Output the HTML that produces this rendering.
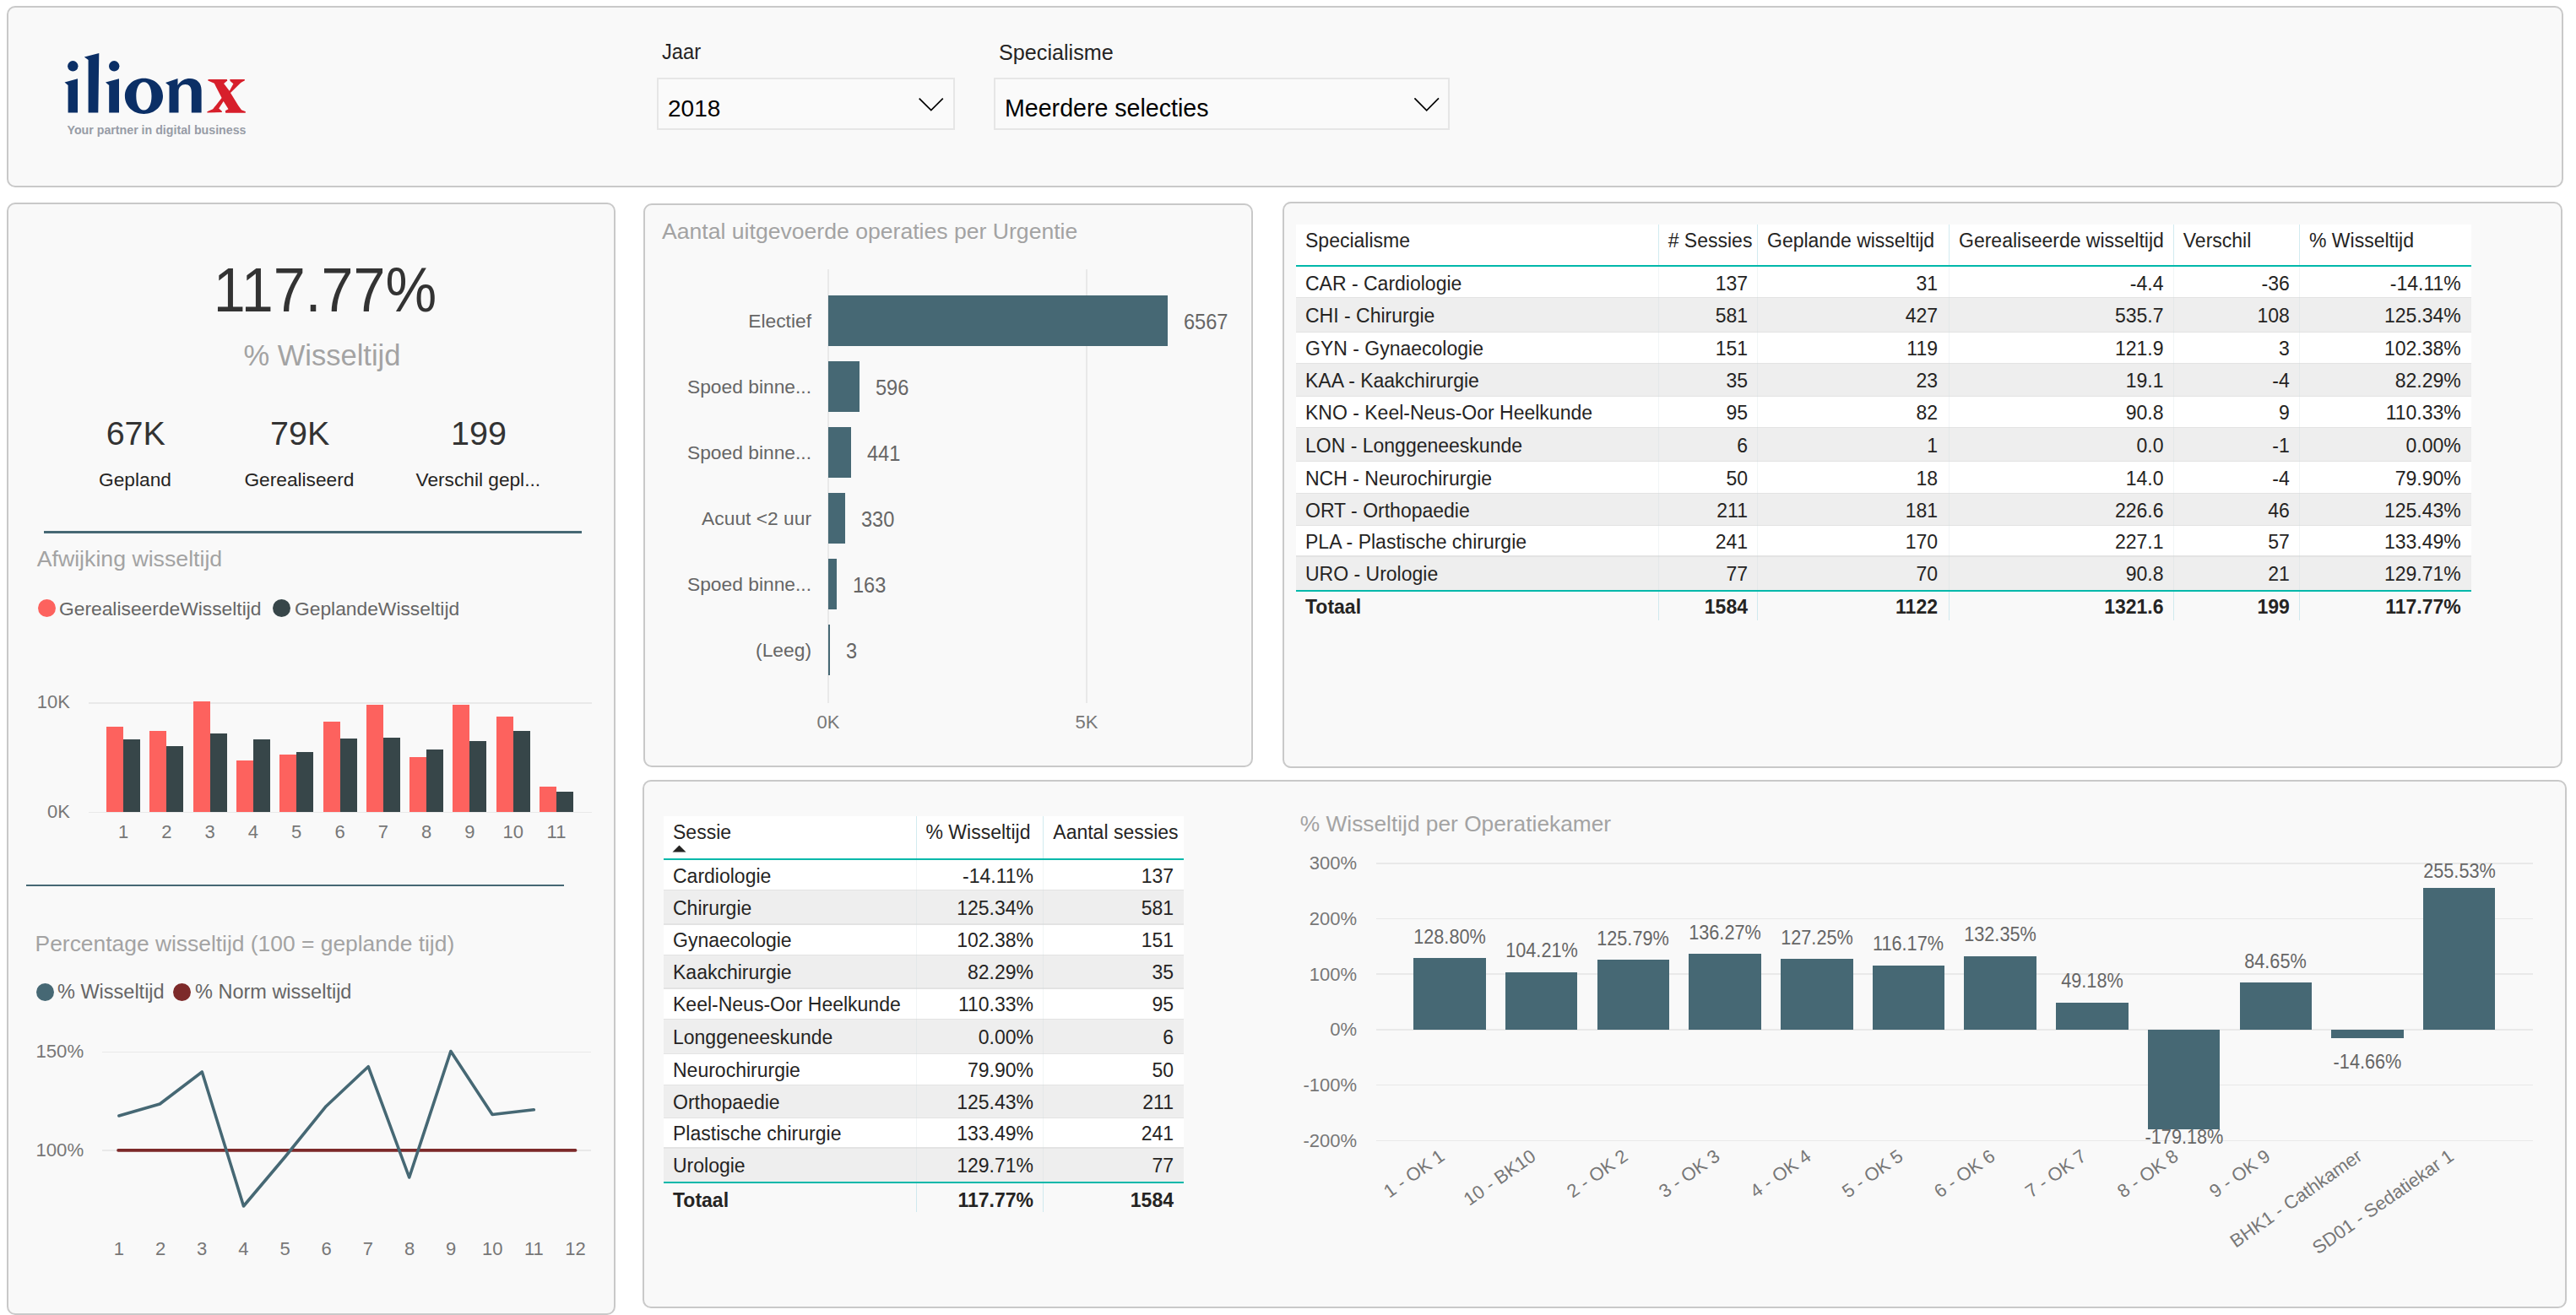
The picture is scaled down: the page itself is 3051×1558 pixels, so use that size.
<!DOCTYPE html>
<html><head><meta charset="utf-8"><title>Dashboard</title>
<style>
html,body{margin:0;padding:0;}
body{width:3051px;height:1558px;position:relative;overflow:hidden;background:#ffffff;font-family:"Liberation Sans",sans-serif;}
.t{position:absolute;white-space:nowrap;line-height:1em;}
.r{position:absolute;}
.p{position:absolute;box-sizing:border-box;border:2px solid #c9c9c9;border-radius:10px;background:#f9f9f9;}
.dot{position:absolute;border-radius:50%;}
</style></head><body>
<div class="p" style="left:8px;top:7px;width:3028px;height:215px;"></div>
<div class="p" style="left:8px;top:240px;width:721px;height:1318px;"></div>
<div class="p" style="left:762px;top:241px;width:722px;height:668px;"></div>
<div class="p" style="left:1519px;top:239px;width:1516px;height:671px;"></div>
<div class="p" style="left:761px;top:924px;width:2279px;height:626px;"></div>
<svg class="r" style="left:60px;top:55px;" width="250" height="115" viewBox="60 55 250 115">
<g fill="#0b2f66">
<circle cx="86.3" cy="78.3" r="6.2"/>
<path d="M76.5 97.5 L92 93.2 L92 133.5 L80.6 133.5 L80.6 101 Z"/>
<path d="M99.8 67.5 L117.3 63.1 L116.3 133.5 L104.6 133.5 L104.6 71 Z"/>
<circle cx="135.2" cy="78.3" r="6.2"/>
<path d="M125 97.5 L141 93.2 L141 133.5 L129.2 133.5 L129.2 101 Z"/>
<path fill-rule="evenodd" d="M170.4 92.7 C183.5 92.7 193 102.2 193 113.8 C193 125.5 183.5 135 170.4 135 C157.4 135 147.9 125.5 147.9 113.8 C147.9 102.2 157.4 92.7 170.4 92.7 Z M170.4 97.2 C164.6 97.2 161.3 104.2 161.3 113.8 C161.3 123.5 164.6 130.5 170.4 130.5 C176.3 130.5 179.5 123.5 179.5 113.8 C179.5 104.2 176.3 97.2 170.4 97.2 Z"/>
<path d="M196 98 L210.5 93 L210.5 101 C214 95.5 219 93 225 93 C233 93 238.6 98 238.6 107 L238.6 133.5 L226.8 133.5 L226.8 109 C226.8 103 224 100 219.5 100 C215 100 211.5 103 211.5 108 L211.5 133.5 L200.5 133.5 L200.5 101.5 Z"/>
</g>
<path fill="#d71f2b" d="M246.3 94.4 L247.1 93.9 L268.8 93.9 L269.3 95.5 L265.1 99.0 L271.8 107.8 L276.4 99.2 L272.6 95.9 L272.2 94.0 L289.7 94.0 L290.0 95.2 L285.2 98.0 L273.0 110.1 L282.2 125.1 L286.0 130.2 L291.0 132.2 L290.6 133.7 L267.2 133.7 L266.8 131.2 L270.5 129.3 L264.7 120.1 L259.2 128.5 L262.6 131.4 L263.0 133.1 L245.4 133.5 L245.4 132.2 L252.1 129.3 L262.6 115.9 L253.8 98.8 L246.3 95.5 Z"/>
<text x="79.5" y="158.5" font-family="Liberation Sans" font-weight="bold" font-size="15.2" fill="#979ca6" textLength="212" lengthAdjust="spacingAndGlyphs">Your partner in digital business</text>
</svg>
<div class="t" style="left:784.0px;top:49.4px;font-size:25.5px;color:#252423;transform:scaleX(0.93);transform-origin:0 0;">Jaar</div>
<div class="t" style="left:1183.0px;top:49.7px;font-size:25.2px;color:#252423;">Specialisme</div>
<div class="r" style="left:778px;top:92px;width:349px;height:58px;border:2px solid #e6e6e6;background:#fafafa"></div>
<div class="r" style="left:1177px;top:92px;width:536px;height:58px;border:2px solid #e6e6e6;background:#fafafa"></div>
<div class="t" style="left:791.0px;top:114.9px;font-size:28px;color:#000;">2018</div>
<div class="t" style="left:1190.0px;top:114.4px;font-size:28.6px;color:#000;">Meerdere selecties</div>
<svg class="r" style="left:0;top:0" width="1800" height="200"><path d="M1088.7 116.6 L1102.8 130.6 L1116.8 116.6 M1675.4 116.4 L1689.7 130.8 L1704 116.4" fill="none" stroke="#000" stroke-width="1.7"/></svg>
<div class="t" style="left:384.8px;top:305.5px;font-size:75px;color:#333333;transform:translateX(-50%) scaleX(0.91);transform-origin:50% 0;">117.77%</div>
<div class="t" style="left:381.5px;top:403.8px;font-size:34.5px;color:#a3a3a3;transform:translateX(-50%);">% Wisseltijd</div>
<div class="t" style="left:160.8px;top:493.9px;font-size:39.5px;color:#333333;transform:translateX(-50%);">67K</div>
<div class="t" style="left:355.2px;top:493.9px;font-size:39.5px;color:#333333;transform:translateX(-50%);">79K</div>
<div class="t" style="left:567.0px;top:493.9px;font-size:39.5px;color:#333333;transform:translateX(-50%);">199</div>
<div class="t" style="left:160.0px;top:556.8px;font-size:22.7px;color:#252423;transform:translateX(-50%);">Gepland</div>
<div class="t" style="left:354.4px;top:556.8px;font-size:22.7px;color:#252423;transform:translateX(-50%);">Gerealiseerd</div>
<div class="t" style="left:566.3px;top:556.8px;font-size:22.7px;color:#252423;transform:translateX(-50%);">Verschil gepl...</div>
<div class="r" style="left:52.0px;top:629.2px;width:637.0px;height:2.5px;background:#466874;"></div>
<div class="t" style="left:43.7px;top:649.4px;font-size:26.7px;color:#a3a3a3;">Afwijking wisseltijd</div>
<div class="dot" style="left:44.5px;top:710.2px;width:21px;height:21px;background:#fd625e"></div>
<div class="t" style="left:70.0px;top:709.7px;font-size:22.8px;color:#666666;">GerealiseerdeWisseltijd</div>
<div class="dot" style="left:323px;top:710.2px;width:21px;height:21px;background:#374649"></div>
<div class="t" style="left:349.0px;top:709.7px;font-size:22.8px;color:#666666;">GeplandeWisseltijd</div>
<div class="r" style="left:105.0px;top:832.0px;width:596.0px;height:1.5px;background:#e9e9e9;"></div>
<div class="r" style="left:105.0px;top:961.5px;width:596.0px;height:1.5px;background:#e9e9e9;"></div>
<div class="t" style="left:83.0px;top:821.4px;font-size:22px;color:#777777;transform:translateX(-100%);">10K</div>
<div class="t" style="left:83.0px;top:951.4px;font-size:22px;color:#777777;transform:translateX(-100%);">0K</div>
<div class="r" style="left:126.0px;top:860.6px;width:20.0px;height:101.4px;background:#fd625e;"></div>
<div class="r" style="left:146.0px;top:875.6px;width:20.0px;height:86.4px;background:#374649;"></div>
<div class="t" style="left:146.0px;top:975.4px;font-size:22px;color:#777777;transform:translateX(-50%);">1</div>
<div class="r" style="left:177.3px;top:865.8px;width:20.0px;height:96.2px;background:#fd625e;"></div>
<div class="r" style="left:197.3px;top:884.0px;width:20.0px;height:78.0px;background:#374649;"></div>
<div class="t" style="left:197.3px;top:975.4px;font-size:22px;color:#777777;transform:translateX(-50%);">2</div>
<div class="r" style="left:228.6px;top:830.8px;width:20.0px;height:131.2px;background:#fd625e;"></div>
<div class="r" style="left:248.6px;top:868.6px;width:20.0px;height:93.4px;background:#374649;"></div>
<div class="t" style="left:248.6px;top:975.4px;font-size:22px;color:#777777;transform:translateX(-50%);">3</div>
<div class="r" style="left:279.9px;top:900.8px;width:20.0px;height:61.2px;background:#fd625e;"></div>
<div class="r" style="left:299.9px;top:876.3px;width:20.0px;height:85.7px;background:#374649;"></div>
<div class="t" style="left:299.9px;top:975.4px;font-size:22px;color:#777777;transform:translateX(-50%);">4</div>
<div class="r" style="left:331.2px;top:893.8px;width:20.0px;height:68.2px;background:#fd625e;"></div>
<div class="r" style="left:351.2px;top:891.0px;width:20.0px;height:71.0px;background:#374649;"></div>
<div class="t" style="left:351.2px;top:975.4px;font-size:22px;color:#777777;transform:translateX(-50%);">5</div>
<div class="r" style="left:382.5px;top:855.3px;width:20.0px;height:106.7px;background:#fd625e;"></div>
<div class="r" style="left:402.5px;top:875.3px;width:20.0px;height:86.7px;background:#374649;"></div>
<div class="t" style="left:402.5px;top:975.4px;font-size:22px;color:#777777;transform:translateX(-50%);">6</div>
<div class="r" style="left:433.8px;top:835.4px;width:20.0px;height:126.6px;background:#fd625e;"></div>
<div class="r" style="left:453.8px;top:873.5px;width:20.0px;height:88.5px;background:#374649;"></div>
<div class="t" style="left:453.8px;top:975.4px;font-size:22px;color:#777777;transform:translateX(-50%);">7</div>
<div class="r" style="left:485.1px;top:897.3px;width:20.0px;height:64.7px;background:#fd625e;"></div>
<div class="r" style="left:505.1px;top:887.5px;width:20.0px;height:74.5px;background:#374649;"></div>
<div class="t" style="left:505.1px;top:975.4px;font-size:22px;color:#777777;transform:translateX(-50%);">8</div>
<div class="r" style="left:536.4px;top:835.4px;width:20.0px;height:126.6px;background:#fd625e;"></div>
<div class="r" style="left:556.4px;top:878.1px;width:20.0px;height:83.9px;background:#374649;"></div>
<div class="t" style="left:556.4px;top:975.4px;font-size:22px;color:#777777;transform:translateX(-50%);">9</div>
<div class="r" style="left:587.7px;top:849.0px;width:20.0px;height:113.0px;background:#fd625e;"></div>
<div class="r" style="left:607.7px;top:866.2px;width:20.0px;height:95.8px;background:#374649;"></div>
<div class="t" style="left:607.7px;top:975.4px;font-size:22px;color:#777777;transform:translateX(-50%);">10</div>
<div class="r" style="left:639.0px;top:932.3px;width:20.0px;height:29.7px;background:#fd625e;"></div>
<div class="r" style="left:659.0px;top:937.5px;width:20.0px;height:24.5px;background:#374649;"></div>
<div class="t" style="left:659.0px;top:975.4px;font-size:22px;color:#777777;transform:translateX(-50%);">11</div>
<div class="r" style="left:31.0px;top:1047.5px;width:637.0px;height:2.5px;background:#466874;"></div>
<div class="t" style="left:41.6px;top:1104.7px;font-size:26.4px;color:#a3a3a3;">Percentage wisseltijd (100 = geplande tijd)</div>
<div class="dot" style="left:42.5px;top:1165px;width:21px;height:21px;background:#466874"></div>
<div class="t" style="left:68.0px;top:1163.6px;font-size:23.5px;color:#666666;">% Wisseltijd</div>
<div class="dot" style="left:205px;top:1165px;width:21px;height:21px;background:#7d2a2a"></div>
<div class="t" style="left:231.0px;top:1163.6px;font-size:23.5px;color:#666666;">% Norm wisseltijd</div>
<div class="r" style="left:121.0px;top:1245.5px;width:579.0px;height:1.5px;background:#e9e9e9;"></div>
<div class="r" style="left:121.0px;top:1362.0px;width:579.0px;height:1.5px;background:#e9e9e9;"></div>
<div class="t" style="left:99.2px;top:1235.2px;font-size:22.2px;color:#777777;transform:translateX(-100%);">150%</div>
<div class="t" style="left:99.2px;top:1352.2px;font-size:22.2px;color:#777777;transform:translateX(-100%);">100%</div>
<svg class="r" style="left:0;top:0" width="729" height="1558"><line x1="140" y1="1362.9" x2="681.6" y2="1362.9" stroke="#7d2a2a" stroke-width="3.6" stroke-linecap="round"/><polyline points="140.9,1322 189.3,1308 239.3,1270 288.5,1429 337.8,1370.5 386.2,1310.7 436.2,1263.7 484.7,1395 533.9,1245.5 583.1,1320.5 632.3,1314.8" fill="none" stroke="#466874" stroke-width="3.6" stroke-linejoin="round" stroke-linecap="round"/></svg>
<div class="t" style="left:140.9px;top:1469.4px;font-size:22px;color:#777777;transform:translateX(-50%);">1</div>
<div class="t" style="left:190.1px;top:1469.4px;font-size:22px;color:#777777;transform:translateX(-50%);">2</div>
<div class="t" style="left:239.2px;top:1469.4px;font-size:22px;color:#777777;transform:translateX(-50%);">3</div>
<div class="t" style="left:288.4px;top:1469.4px;font-size:22px;color:#777777;transform:translateX(-50%);">4</div>
<div class="t" style="left:337.5px;top:1469.4px;font-size:22px;color:#777777;transform:translateX(-50%);">5</div>
<div class="t" style="left:386.6px;top:1469.4px;font-size:22px;color:#777777;transform:translateX(-50%);">6</div>
<div class="t" style="left:435.8px;top:1469.4px;font-size:22px;color:#777777;transform:translateX(-50%);">7</div>
<div class="t" style="left:485.0px;top:1469.4px;font-size:22px;color:#777777;transform:translateX(-50%);">8</div>
<div class="t" style="left:534.1px;top:1469.4px;font-size:22px;color:#777777;transform:translateX(-50%);">9</div>
<div class="t" style="left:583.2px;top:1469.4px;font-size:22px;color:#777777;transform:translateX(-50%);">10</div>
<div class="t" style="left:632.4px;top:1469.4px;font-size:22px;color:#777777;transform:translateX(-50%);">11</div>
<div class="t" style="left:681.5px;top:1469.4px;font-size:22px;color:#777777;transform:translateX(-50%);">12</div>
<div class="t" style="left:784.0px;top:260.9px;font-size:26.6px;color:#a3a3a3;">Aantal uitgevoerde operaties per Urgentie</div>
<div class="r" style="left:980.2px;top:319.0px;width:1.6px;height:514.0px;background:#e9e9e9;"></div>
<div class="r" style="left:1286.0px;top:319.0px;width:1.6px;height:514.0px;background:#e9e9e9;"></div>
<div class="r" style="left:981.0px;top:350.1px;width:401.6px;height:60.0px;background:#466874;"></div>
<div class="t" style="left:961.0px;top:369.0px;font-size:22.8px;color:#666666;transform:translateX(-100%);">Electief</div>
<div class="t" style="left:1401.6px;top:369.0px;font-size:25.5px;color:#666666;transform:scaleX(0.925);transform-origin:0 0;">6567</div>
<div class="r" style="left:981.0px;top:428.2px;width:36.5px;height:60.0px;background:#466874;"></div>
<div class="t" style="left:961.0px;top:447.0px;font-size:22.8px;color:#666666;transform:translateX(-100%);">Spoed binne...</div>
<div class="t" style="left:1036.5px;top:447.1px;font-size:25.5px;color:#666666;transform:scaleX(0.925);transform-origin:0 0;">596</div>
<div class="r" style="left:981.0px;top:506.2px;width:27.0px;height:60.0px;background:#466874;"></div>
<div class="t" style="left:961.0px;top:525.1px;font-size:22.8px;color:#666666;transform:translateX(-100%);">Spoed binne...</div>
<div class="t" style="left:1027.0px;top:525.1px;font-size:25.5px;color:#666666;transform:scaleX(0.925);transform-origin:0 0;">441</div>
<div class="r" style="left:981.0px;top:584.2px;width:20.2px;height:60.0px;background:#466874;"></div>
<div class="t" style="left:961.0px;top:603.1px;font-size:22.8px;color:#666666;transform:translateX(-100%);">Acuut &lt;2 uur</div>
<div class="t" style="left:1020.2px;top:603.2px;font-size:25.5px;color:#666666;transform:scaleX(0.925);transform-origin:0 0;">330</div>
<div class="r" style="left:981.0px;top:662.3px;width:10.0px;height:60.0px;background:#466874;"></div>
<div class="t" style="left:961.0px;top:681.2px;font-size:22.8px;color:#666666;transform:translateX(-100%);">Spoed binne...</div>
<div class="t" style="left:1010.0px;top:681.2px;font-size:25.5px;color:#666666;transform:scaleX(0.925);transform-origin:0 0;">163</div>
<div class="r" style="left:981.0px;top:740.4px;width:2.2px;height:60.0px;background:#466874;"></div>
<div class="t" style="left:961.0px;top:759.2px;font-size:22.8px;color:#666666;transform:translateX(-100%);">(Leeg)</div>
<div class="t" style="left:1002.2px;top:759.3px;font-size:25.5px;color:#666666;transform:scaleX(0.925);transform-origin:0 0;">3</div>
<div class="t" style="left:981.0px;top:845.4px;font-size:22px;color:#777777;transform:translateX(-50%);">0K</div>
<div class="t" style="left:1287.0px;top:845.4px;font-size:22px;color:#777777;transform:translateX(-50%);">5K</div>
<div class="r" style="left:1535.0px;top:265.6px;width:1392.0px;height:48.4px;background:#ffffff;"></div>
<div class="r" style="left:1535.0px;top:314.0px;width:1392.0px;height:2.3px;background:#01b8aa;"></div>
<div class="r" style="left:1535.0px;top:316.3px;width:1392.0px;height:36.1px;background:#ffffff;"></div>
<div class="r" style="left:1535.0px;top:352.4px;width:1392.0px;height:41.3px;background:#eeeeee;"></div>
<div class="r" style="left:1535.0px;top:351.9px;width:1392.0px;height:1.3px;background:#e3e3e3;"></div>
<div class="r" style="left:1535.0px;top:393.7px;width:1392.0px;height:36.6px;background:#ffffff;"></div>
<div class="r" style="left:1535.0px;top:393.2px;width:1392.0px;height:1.3px;background:#e3e3e3;"></div>
<div class="r" style="left:1535.0px;top:430.3px;width:1392.0px;height:38.7px;background:#eeeeee;"></div>
<div class="r" style="left:1535.0px;top:429.8px;width:1392.0px;height:1.3px;background:#e3e3e3;"></div>
<div class="r" style="left:1535.0px;top:469.0px;width:1392.0px;height:37.4px;background:#ffffff;"></div>
<div class="r" style="left:1535.0px;top:468.5px;width:1392.0px;height:1.3px;background:#e3e3e3;"></div>
<div class="r" style="left:1535.0px;top:506.4px;width:1392.0px;height:40.0px;background:#eeeeee;"></div>
<div class="r" style="left:1535.0px;top:505.9px;width:1392.0px;height:1.3px;background:#e3e3e3;"></div>
<div class="r" style="left:1535.0px;top:546.4px;width:1392.0px;height:37.9px;background:#ffffff;"></div>
<div class="r" style="left:1535.0px;top:545.9px;width:1392.0px;height:1.3px;background:#e3e3e3;"></div>
<div class="r" style="left:1535.0px;top:584.3px;width:1392.0px;height:38.2px;background:#eeeeee;"></div>
<div class="r" style="left:1535.0px;top:583.8px;width:1392.0px;height:1.3px;background:#e3e3e3;"></div>
<div class="r" style="left:1535.0px;top:622.5px;width:1392.0px;height:36.3px;background:#ffffff;"></div>
<div class="r" style="left:1535.0px;top:622.0px;width:1392.0px;height:1.3px;background:#e3e3e3;"></div>
<div class="r" style="left:1535.0px;top:658.8px;width:1392.0px;height:39.8px;background:#eeeeee;"></div>
<div class="r" style="left:1535.0px;top:658.3px;width:1392.0px;height:1.3px;background:#e3e3e3;"></div>
<div class="r" style="left:1535.0px;top:698.6px;width:1392.0px;height:2.3px;background:#01b8aa;"></div>
<div class="r" style="left:1963.7px;top:265.6px;width:1.1px;height:48.4px;background:rgba(180,222,230,0.6);"></div>
<div class="r" style="left:1963.7px;top:316.3px;width:1.1px;height:382.3px;background:rgba(200,215,220,0.25);"></div>
<div class="r" style="left:1963.7px;top:700.9px;width:1.1px;height:34.3px;background:rgba(180,222,230,0.6);"></div>
<div class="r" style="left:2080.8px;top:265.6px;width:1.1px;height:48.4px;background:rgba(180,222,230,0.6);"></div>
<div class="r" style="left:2080.8px;top:316.3px;width:1.1px;height:382.3px;background:rgba(200,215,220,0.25);"></div>
<div class="r" style="left:2080.8px;top:700.9px;width:1.1px;height:34.3px;background:rgba(180,222,230,0.6);"></div>
<div class="r" style="left:2308.0px;top:265.6px;width:1.1px;height:48.4px;background:rgba(180,222,230,0.6);"></div>
<div class="r" style="left:2308.0px;top:316.3px;width:1.1px;height:382.3px;background:rgba(200,215,220,0.25);"></div>
<div class="r" style="left:2308.0px;top:700.9px;width:1.1px;height:34.3px;background:rgba(180,222,230,0.6);"></div>
<div class="r" style="left:2573.8px;top:265.6px;width:1.1px;height:48.4px;background:rgba(180,222,230,0.6);"></div>
<div class="r" style="left:2573.8px;top:316.3px;width:1.1px;height:382.3px;background:rgba(200,215,220,0.25);"></div>
<div class="r" style="left:2573.8px;top:700.9px;width:1.1px;height:34.3px;background:rgba(180,222,230,0.6);"></div>
<div class="r" style="left:2722.8px;top:265.6px;width:1.1px;height:48.4px;background:rgba(180,222,230,0.6);"></div>
<div class="r" style="left:2722.8px;top:316.3px;width:1.1px;height:382.3px;background:rgba(200,215,220,0.25);"></div>
<div class="r" style="left:2722.8px;top:700.9px;width:1.1px;height:34.3px;background:rgba(180,222,230,0.6);"></div>
<div class="t" style="left:1546.0px;top:274.0px;font-size:23px;color:#252423;">Specialisme</div>
<div class="t" style="left:1975.7px;top:274.0px;font-size:23px;color:#252423;"># Sessies</div>
<div class="t" style="left:2093.0px;top:274.0px;font-size:23px;color:#252423;">Geplande wisseltijd</div>
<div class="t" style="left:2320.0px;top:274.0px;font-size:23px;color:#252423;">Gerealiseerde wisseltijd</div>
<div class="t" style="left:2585.8px;top:274.0px;font-size:23px;color:#252423;">Verschil</div>
<div class="t" style="left:2735.0px;top:274.0px;font-size:23px;color:#252423;">% Wisseltijd</div>
<div class="t" style="left:1546.0px;top:324.5px;font-size:23px;color:#252423;">CAR - Cardiologie</div>
<div class="t" style="left:2070.0px;top:324.5px;font-size:23px;color:#252423;transform:translateX(-100%);">137</div>
<div class="t" style="left:2295.0px;top:324.5px;font-size:23px;color:#252423;transform:translateX(-100%);">31</div>
<div class="t" style="left:2562.5px;top:324.5px;font-size:23px;color:#252423;transform:translateX(-100%);">-4.4</div>
<div class="t" style="left:2711.8px;top:324.5px;font-size:23px;color:#252423;transform:translateX(-100%);">-36</div>
<div class="t" style="left:2914.8px;top:324.5px;font-size:23px;color:#252423;transform:translateX(-100%);">-14.11%</div>
<div class="t" style="left:1546.0px;top:363.2px;font-size:23px;color:#252423;">CHI - Chirurgie</div>
<div class="t" style="left:2070.0px;top:363.2px;font-size:23px;color:#252423;transform:translateX(-100%);">581</div>
<div class="t" style="left:2295.0px;top:363.2px;font-size:23px;color:#252423;transform:translateX(-100%);">427</div>
<div class="t" style="left:2562.5px;top:363.2px;font-size:23px;color:#252423;transform:translateX(-100%);">535.7</div>
<div class="t" style="left:2711.8px;top:363.2px;font-size:23px;color:#252423;transform:translateX(-100%);">108</div>
<div class="t" style="left:2914.8px;top:363.2px;font-size:23px;color:#252423;transform:translateX(-100%);">125.34%</div>
<div class="t" style="left:1546.0px;top:402.1px;font-size:23px;color:#252423;">GYN - Gynaecologie</div>
<div class="t" style="left:2070.0px;top:402.1px;font-size:23px;color:#252423;transform:translateX(-100%);">151</div>
<div class="t" style="left:2295.0px;top:402.1px;font-size:23px;color:#252423;transform:translateX(-100%);">119</div>
<div class="t" style="left:2562.5px;top:402.1px;font-size:23px;color:#252423;transform:translateX(-100%);">121.9</div>
<div class="t" style="left:2711.8px;top:402.1px;font-size:23px;color:#252423;transform:translateX(-100%);">3</div>
<div class="t" style="left:2914.8px;top:402.1px;font-size:23px;color:#252423;transform:translateX(-100%);">102.38%</div>
<div class="t" style="left:1546.0px;top:439.8px;font-size:23px;color:#252423;">KAA - Kaakchirurgie</div>
<div class="t" style="left:2070.0px;top:439.8px;font-size:23px;color:#252423;transform:translateX(-100%);">35</div>
<div class="t" style="left:2295.0px;top:439.8px;font-size:23px;color:#252423;transform:translateX(-100%);">23</div>
<div class="t" style="left:2562.5px;top:439.8px;font-size:23px;color:#252423;transform:translateX(-100%);">19.1</div>
<div class="t" style="left:2711.8px;top:439.8px;font-size:23px;color:#252423;transform:translateX(-100%);">-4</div>
<div class="t" style="left:2914.8px;top:439.8px;font-size:23px;color:#252423;transform:translateX(-100%);">82.29%</div>
<div class="t" style="left:1546.0px;top:477.8px;font-size:23px;color:#252423;">KNO - Keel-Neus-Oor Heelkunde</div>
<div class="t" style="left:2070.0px;top:477.8px;font-size:23px;color:#252423;transform:translateX(-100%);">95</div>
<div class="t" style="left:2295.0px;top:477.8px;font-size:23px;color:#252423;transform:translateX(-100%);">82</div>
<div class="t" style="left:2562.5px;top:477.8px;font-size:23px;color:#252423;transform:translateX(-100%);">90.8</div>
<div class="t" style="left:2711.8px;top:477.8px;font-size:23px;color:#252423;transform:translateX(-100%);">9</div>
<div class="t" style="left:2914.8px;top:477.8px;font-size:23px;color:#252423;transform:translateX(-100%);">110.33%</div>
<div class="t" style="left:1546.0px;top:516.5px;font-size:23px;color:#252423;">LON - Longgeneeskunde</div>
<div class="t" style="left:2070.0px;top:516.5px;font-size:23px;color:#252423;transform:translateX(-100%);">6</div>
<div class="t" style="left:2295.0px;top:516.5px;font-size:23px;color:#252423;transform:translateX(-100%);">1</div>
<div class="t" style="left:2562.5px;top:516.5px;font-size:23px;color:#252423;transform:translateX(-100%);">0.0</div>
<div class="t" style="left:2711.8px;top:516.5px;font-size:23px;color:#252423;transform:translateX(-100%);">-1</div>
<div class="t" style="left:2914.8px;top:516.5px;font-size:23px;color:#252423;transform:translateX(-100%);">0.00%</div>
<div class="t" style="left:1546.0px;top:555.5px;font-size:23px;color:#252423;">NCH - Neurochirurgie</div>
<div class="t" style="left:2070.0px;top:555.5px;font-size:23px;color:#252423;transform:translateX(-100%);">50</div>
<div class="t" style="left:2295.0px;top:555.5px;font-size:23px;color:#252423;transform:translateX(-100%);">18</div>
<div class="t" style="left:2562.5px;top:555.5px;font-size:23px;color:#252423;transform:translateX(-100%);">14.0</div>
<div class="t" style="left:2711.8px;top:555.5px;font-size:23px;color:#252423;transform:translateX(-100%);">-4</div>
<div class="t" style="left:2914.8px;top:555.5px;font-size:23px;color:#252423;transform:translateX(-100%);">79.90%</div>
<div class="t" style="left:1546.0px;top:593.5px;font-size:23px;color:#252423;">ORT - Orthopaedie</div>
<div class="t" style="left:2070.0px;top:593.5px;font-size:23px;color:#252423;transform:translateX(-100%);">211</div>
<div class="t" style="left:2295.0px;top:593.5px;font-size:23px;color:#252423;transform:translateX(-100%);">181</div>
<div class="t" style="left:2562.5px;top:593.5px;font-size:23px;color:#252423;transform:translateX(-100%);">226.6</div>
<div class="t" style="left:2711.8px;top:593.5px;font-size:23px;color:#252423;transform:translateX(-100%);">46</div>
<div class="t" style="left:2914.8px;top:593.5px;font-size:23px;color:#252423;transform:translateX(-100%);">125.43%</div>
<div class="t" style="left:1546.0px;top:630.8px;font-size:23px;color:#252423;">PLA - Plastische chirurgie</div>
<div class="t" style="left:2070.0px;top:630.8px;font-size:23px;color:#252423;transform:translateX(-100%);">241</div>
<div class="t" style="left:2295.0px;top:630.8px;font-size:23px;color:#252423;transform:translateX(-100%);">170</div>
<div class="t" style="left:2562.5px;top:630.8px;font-size:23px;color:#252423;transform:translateX(-100%);">227.1</div>
<div class="t" style="left:2711.8px;top:630.8px;font-size:23px;color:#252423;transform:translateX(-100%);">57</div>
<div class="t" style="left:2914.8px;top:630.8px;font-size:23px;color:#252423;transform:translateX(-100%);">133.49%</div>
<div class="t" style="left:1546.0px;top:668.8px;font-size:23px;color:#252423;">URO - Urologie</div>
<div class="t" style="left:2070.0px;top:668.8px;font-size:23px;color:#252423;transform:translateX(-100%);">77</div>
<div class="t" style="left:2295.0px;top:668.8px;font-size:23px;color:#252423;transform:translateX(-100%);">70</div>
<div class="t" style="left:2562.5px;top:668.8px;font-size:23px;color:#252423;transform:translateX(-100%);">90.8</div>
<div class="t" style="left:2711.8px;top:668.8px;font-size:23px;color:#252423;transform:translateX(-100%);">21</div>
<div class="t" style="left:2914.8px;top:668.8px;font-size:23px;color:#252423;transform:translateX(-100%);">129.71%</div>
<div class="t" style="left:1546.0px;top:707.8px;font-size:23px;color:#252423;font-weight:bold;">Totaal</div>
<div class="t" style="left:2070.0px;top:707.8px;font-size:23px;color:#252423;transform:translateX(-100%);font-weight:bold;">1584</div>
<div class="t" style="left:2295.0px;top:707.8px;font-size:23px;color:#252423;transform:translateX(-100%);font-weight:bold;">1122</div>
<div class="t" style="left:2562.5px;top:707.8px;font-size:23px;color:#252423;transform:translateX(-100%);font-weight:bold;">1321.6</div>
<div class="t" style="left:2711.8px;top:707.8px;font-size:23px;color:#252423;transform:translateX(-100%);font-weight:bold;">199</div>
<div class="t" style="left:2914.8px;top:707.8px;font-size:23px;color:#252423;transform:translateX(-100%);font-weight:bold;">117.77%</div>
<div class="r" style="left:786.0px;top:967.0px;width:615.6px;height:49.5px;background:#ffffff;"></div>
<div class="r" style="left:786.0px;top:1016.5px;width:615.6px;height:2.3px;background:#01b8aa;"></div>
<div class="r" style="left:786.0px;top:1018.8px;width:615.6px;height:35.2px;background:#ffffff;"></div>
<div class="r" style="left:786.0px;top:1054.0px;width:615.6px;height:40.8px;background:#eeeeee;"></div>
<div class="r" style="left:786.0px;top:1053.5px;width:615.6px;height:1.3px;background:#e3e3e3;"></div>
<div class="r" style="left:786.0px;top:1094.8px;width:615.6px;height:36.7px;background:#ffffff;"></div>
<div class="r" style="left:786.0px;top:1094.3px;width:615.6px;height:1.3px;background:#e3e3e3;"></div>
<div class="r" style="left:786.0px;top:1131.5px;width:615.6px;height:39.4px;background:#eeeeee;"></div>
<div class="r" style="left:786.0px;top:1131.0px;width:615.6px;height:1.3px;background:#e3e3e3;"></div>
<div class="r" style="left:786.0px;top:1170.9px;width:615.6px;height:36.7px;background:#ffffff;"></div>
<div class="r" style="left:786.0px;top:1170.4px;width:615.6px;height:1.3px;background:#e3e3e3;"></div>
<div class="r" style="left:786.0px;top:1207.6px;width:615.6px;height:40.9px;background:#eeeeee;"></div>
<div class="r" style="left:786.0px;top:1207.1px;width:615.6px;height:1.3px;background:#e3e3e3;"></div>
<div class="r" style="left:786.0px;top:1248.5px;width:615.6px;height:37.2px;background:#ffffff;"></div>
<div class="r" style="left:786.0px;top:1248.0px;width:615.6px;height:1.3px;background:#e3e3e3;"></div>
<div class="r" style="left:786.0px;top:1285.7px;width:615.6px;height:38.9px;background:#eeeeee;"></div>
<div class="r" style="left:786.0px;top:1285.2px;width:615.6px;height:1.3px;background:#e3e3e3;"></div>
<div class="r" style="left:786.0px;top:1324.6px;width:615.6px;height:35.3px;background:#ffffff;"></div>
<div class="r" style="left:786.0px;top:1324.1px;width:615.6px;height:1.3px;background:#e3e3e3;"></div>
<div class="r" style="left:786.0px;top:1359.9px;width:615.6px;height:39.9px;background:#eeeeee;"></div>
<div class="r" style="left:786.0px;top:1359.4px;width:615.6px;height:1.3px;background:#e3e3e3;"></div>
<div class="r" style="left:786.0px;top:1399.8px;width:615.6px;height:2.3px;background:#01b8aa;"></div>
<div class="r" style="left:1084.5px;top:967.0px;width:1.1px;height:49.5px;background:rgba(180,222,230,0.6);"></div>
<div class="r" style="left:1084.5px;top:1018.8px;width:1.1px;height:381.0px;background:rgba(200,215,220,0.25);"></div>
<div class="r" style="left:1084.5px;top:1402.1px;width:1.1px;height:34.4px;background:rgba(180,222,230,0.6);"></div>
<div class="r" style="left:1235.4px;top:967.0px;width:1.1px;height:49.5px;background:rgba(180,222,230,0.6);"></div>
<div class="r" style="left:1235.4px;top:1018.8px;width:1.1px;height:381.0px;background:rgba(200,215,220,0.25);"></div>
<div class="r" style="left:1235.4px;top:1402.1px;width:1.1px;height:34.4px;background:rgba(180,222,230,0.6);"></div>
<div class="t" style="left:797.0px;top:974.5px;font-size:23px;color:#252423;">Sessie</div>
<svg class="r" style="left:790px;top:995px" width="30" height="20"><path d="M6.5 14.5 L14.5 6.5 L22.5 14.5 Z" fill="#252423"/></svg>
<div class="t" style="left:1096.5px;top:974.5px;font-size:23px;color:#252423;">% Wisseltijd</div>
<div class="t" style="left:1247.3px;top:974.5px;font-size:23px;color:#252423;">Aantal sessies</div>
<div class="t" style="left:797.0px;top:1026.5px;font-size:23px;color:#252423;">Cardiologie</div>
<div class="t" style="left:1224.0px;top:1026.5px;font-size:23px;color:#252423;transform:translateX(-100%);">-14.11%</div>
<div class="t" style="left:1390.0px;top:1026.5px;font-size:23px;color:#252423;transform:translateX(-100%);">137</div>
<div class="t" style="left:797.0px;top:1064.5px;font-size:23px;color:#252423;">Chirurgie</div>
<div class="t" style="left:1224.0px;top:1064.5px;font-size:23px;color:#252423;transform:translateX(-100%);">125.34%</div>
<div class="t" style="left:1390.0px;top:1064.5px;font-size:23px;color:#252423;transform:translateX(-100%);">581</div>
<div class="t" style="left:797.0px;top:1103.3px;font-size:23px;color:#252423;">Gynaecologie</div>
<div class="t" style="left:1224.0px;top:1103.3px;font-size:23px;color:#252423;transform:translateX(-100%);">102.38%</div>
<div class="t" style="left:1390.0px;top:1103.3px;font-size:23px;color:#252423;transform:translateX(-100%);">151</div>
<div class="t" style="left:797.0px;top:1141.3px;font-size:23px;color:#252423;">Kaakchirurgie</div>
<div class="t" style="left:1224.0px;top:1141.3px;font-size:23px;color:#252423;transform:translateX(-100%);">82.29%</div>
<div class="t" style="left:1390.0px;top:1141.3px;font-size:23px;color:#252423;transform:translateX(-100%);">35</div>
<div class="t" style="left:797.0px;top:1179.4px;font-size:23px;color:#252423;">Keel-Neus-Oor Heelkunde</div>
<div class="t" style="left:1224.0px;top:1179.4px;font-size:23px;color:#252423;transform:translateX(-100%);">110.33%</div>
<div class="t" style="left:1390.0px;top:1179.4px;font-size:23px;color:#252423;transform:translateX(-100%);">95</div>
<div class="t" style="left:797.0px;top:1218.2px;font-size:23px;color:#252423;">Longgeneeskunde</div>
<div class="t" style="left:1224.0px;top:1218.2px;font-size:23px;color:#252423;transform:translateX(-100%);">0.00%</div>
<div class="t" style="left:1390.0px;top:1218.2px;font-size:23px;color:#252423;transform:translateX(-100%);">6</div>
<div class="t" style="left:797.0px;top:1257.2px;font-size:23px;color:#252423;">Neurochirurgie</div>
<div class="t" style="left:1224.0px;top:1257.2px;font-size:23px;color:#252423;transform:translateX(-100%);">79.90%</div>
<div class="t" style="left:1390.0px;top:1257.2px;font-size:23px;color:#252423;transform:translateX(-100%);">50</div>
<div class="t" style="left:797.0px;top:1295.3px;font-size:23px;color:#252423;">Orthopaedie</div>
<div class="t" style="left:1224.0px;top:1295.3px;font-size:23px;color:#252423;transform:translateX(-100%);">125.43%</div>
<div class="t" style="left:1390.0px;top:1295.3px;font-size:23px;color:#252423;transform:translateX(-100%);">211</div>
<div class="t" style="left:797.0px;top:1332.4px;font-size:23px;color:#252423;">Plastische chirurgie</div>
<div class="t" style="left:1224.0px;top:1332.4px;font-size:23px;color:#252423;transform:translateX(-100%);">133.49%</div>
<div class="t" style="left:1390.0px;top:1332.4px;font-size:23px;color:#252423;transform:translateX(-100%);">241</div>
<div class="t" style="left:797.0px;top:1370.0px;font-size:23px;color:#252423;">Urologie</div>
<div class="t" style="left:1224.0px;top:1370.0px;font-size:23px;color:#252423;transform:translateX(-100%);">129.71%</div>
<div class="t" style="left:1390.0px;top:1370.0px;font-size:23px;color:#252423;transform:translateX(-100%);">77</div>
<div class="t" style="left:797.0px;top:1410.5px;font-size:23px;color:#252423;font-weight:bold;">Totaal</div>
<div class="t" style="left:1224.0px;top:1410.5px;font-size:23px;color:#252423;transform:translateX(-100%);font-weight:bold;">117.77%</div>
<div class="t" style="left:1390.0px;top:1410.5px;font-size:23px;color:#252423;transform:translateX(-100%);font-weight:bold;">1584</div>
<div class="t" style="left:1539.8px;top:963.0px;font-size:26.3px;color:#a3a3a3;">% Wisseltijd per Operatiekamer</div>
<div class="r" style="left:1630.0px;top:1022.0px;width:1370.0px;height:1.6px;background:#e9e9e9;"></div>
<div class="t" style="left:1607.0px;top:1012.2px;font-size:22px;color:#777777;transform:translateX(-100%);">300%</div>
<div class="r" style="left:1630.0px;top:1087.7px;width:1370.0px;height:1.6px;background:#e9e9e9;"></div>
<div class="t" style="left:1607.0px;top:1077.9px;font-size:22px;color:#777777;transform:translateX(-100%);">200%</div>
<div class="r" style="left:1630.0px;top:1153.3px;width:1370.0px;height:1.6px;background:#e9e9e9;"></div>
<div class="t" style="left:1607.0px;top:1143.5px;font-size:22px;color:#777777;transform:translateX(-100%);">100%</div>
<div class="r" style="left:1630.0px;top:1219.2px;width:1370.0px;height:1.6px;background:#e9e9e9;"></div>
<div class="t" style="left:1607.0px;top:1209.4px;font-size:22px;color:#777777;transform:translateX(-100%);">0%</div>
<div class="r" style="left:1630.0px;top:1284.8px;width:1370.0px;height:1.6px;background:#e9e9e9;"></div>
<div class="t" style="left:1607.0px;top:1275.0px;font-size:22px;color:#777777;transform:translateX(-100%);">-100%</div>
<div class="r" style="left:1630.0px;top:1350.7px;width:1370.0px;height:1.6px;background:#e9e9e9;"></div>
<div class="t" style="left:1607.0px;top:1340.9px;font-size:22px;color:#777777;transform:translateX(-100%);">-200%</div>
<div class="r" style="left:1674.2px;top:1135.3px;width:85.5px;height:84.7px;background:#466874;"></div>
<div class="t" style="left:1717.0px;top:1097.7px;font-size:24.5px;color:#666666;transform:translateX(-50%) scaleX(0.885);transform-origin:50% 0;">128.80%</div>
<div class="t" style="right:1338.5px;top:1355.4px;font-size:22px;color:#777777;transform-origin:100% 18.62px;transform:rotate(-35deg)">1 - OK 1</div>
<div class="r" style="left:1782.9px;top:1151.5px;width:85.5px;height:68.5px;background:#466874;"></div>
<div class="t" style="left:1825.7px;top:1113.8px;font-size:24.5px;color:#666666;transform:translateX(-50%) scaleX(0.885);transform-origin:50% 0;">104.21%</div>
<div class="t" style="right:1229.8px;top:1355.4px;font-size:22px;color:#777777;transform-origin:100% 18.62px;transform:rotate(-35deg)">10 - BK10</div>
<div class="r" style="left:1891.6px;top:1137.3px;width:85.5px;height:82.7px;background:#466874;"></div>
<div class="t" style="left:1934.4px;top:1099.7px;font-size:24.5px;color:#666666;transform:translateX(-50%) scaleX(0.885);transform-origin:50% 0;">125.79%</div>
<div class="t" style="right:1121.1px;top:1355.4px;font-size:22px;color:#777777;transform-origin:100% 18.62px;transform:rotate(-35deg)">2 - OK 2</div>
<div class="r" style="left:2000.3px;top:1130.4px;width:85.5px;height:89.6px;background:#466874;"></div>
<div class="t" style="left:2043.1px;top:1092.8px;font-size:24.5px;color:#666666;transform:translateX(-50%) scaleX(0.885);transform-origin:50% 0;">136.27%</div>
<div class="t" style="right:1012.4px;top:1355.4px;font-size:22px;color:#777777;transform-origin:100% 18.62px;transform:rotate(-35deg)">3 - OK 3</div>
<div class="r" style="left:2109.0px;top:1136.3px;width:85.5px;height:83.7px;background:#466874;"></div>
<div class="t" style="left:2151.8px;top:1098.7px;font-size:24.5px;color:#666666;transform:translateX(-50%) scaleX(0.885);transform-origin:50% 0;">127.25%</div>
<div class="t" style="right:903.8px;top:1355.4px;font-size:22px;color:#777777;transform-origin:100% 18.62px;transform:rotate(-35deg)">4 - OK 4</div>
<div class="r" style="left:2217.7px;top:1143.6px;width:85.5px;height:76.4px;background:#466874;"></div>
<div class="t" style="left:2260.4px;top:1106.0px;font-size:24.5px;color:#666666;transform:translateX(-50%) scaleX(0.885);transform-origin:50% 0;">116.17%</div>
<div class="t" style="right:795.1px;top:1355.4px;font-size:22px;color:#777777;transform-origin:100% 18.62px;transform:rotate(-35deg)">5 - OK 5</div>
<div class="r" style="left:2326.4px;top:1133.0px;width:85.5px;height:87.0px;background:#466874;"></div>
<div class="t" style="left:2369.2px;top:1095.3px;font-size:24.5px;color:#666666;transform:translateX(-50%) scaleX(0.885);transform-origin:50% 0;">132.35%</div>
<div class="t" style="right:686.3px;top:1355.4px;font-size:22px;color:#777777;transform-origin:100% 18.62px;transform:rotate(-35deg)">6 - OK 6</div>
<div class="r" style="left:2435.1px;top:1187.7px;width:85.5px;height:32.3px;background:#466874;"></div>
<div class="t" style="left:2477.8px;top:1150.0px;font-size:24.5px;color:#666666;transform:translateX(-50%) scaleX(0.885);transform-origin:50% 0;">49.18%</div>
<div class="t" style="right:577.7px;top:1355.4px;font-size:22px;color:#777777;transform-origin:100% 18.62px;transform:rotate(-35deg)">7 - OK 7</div>
<div class="r" style="left:2543.8px;top:1220.0px;width:85.5px;height:117.8px;background:#466874;"></div>
<div class="t" style="left:2586.6px;top:1334.6px;font-size:24.5px;color:#666666;transform:translateX(-50%) scaleX(0.885);transform-origin:50% 0;">-179.18%</div>
<div class="t" style="right:468.9px;top:1355.4px;font-size:22px;color:#777777;transform-origin:100% 18.62px;transform:rotate(-35deg)">8 - OK 8</div>
<div class="r" style="left:2652.5px;top:1164.3px;width:85.5px;height:55.7px;background:#466874;"></div>
<div class="t" style="left:2695.2px;top:1126.7px;font-size:24.5px;color:#666666;transform:translateX(-50%) scaleX(0.885);transform-origin:50% 0;">84.65%</div>
<div class="t" style="right:360.2px;top:1355.4px;font-size:22px;color:#777777;transform-origin:100% 18.62px;transform:rotate(-35deg)">9 - OK 9</div>
<div class="r" style="left:2761.2px;top:1220.0px;width:85.5px;height:9.6px;background:#466874;"></div>
<div class="t" style="left:2803.9px;top:1245.7px;font-size:24.5px;color:#666666;transform:translateX(-50%) scaleX(0.885);transform-origin:50% 0;">-14.66%</div>
<div class="t" style="right:251.6px;top:1355.4px;font-size:22px;color:#777777;transform-origin:100% 18.62px;transform:rotate(-35deg)">BHK1 - Cathkamer</div>
<div class="r" style="left:2869.9px;top:1052.0px;width:85.5px;height:168.0px;background:#466874;"></div>
<div class="t" style="left:2912.7px;top:1019.8px;font-size:24.5px;color:#666666;transform:translateX(-50%) scaleX(0.885);transform-origin:50% 0;">255.53%</div>
<div class="t" style="right:142.8px;top:1355.4px;font-size:22px;color:#777777;transform-origin:100% 18.62px;transform:rotate(-35deg)">SD01 - Sedatiekar 1</div>
</body></html>
